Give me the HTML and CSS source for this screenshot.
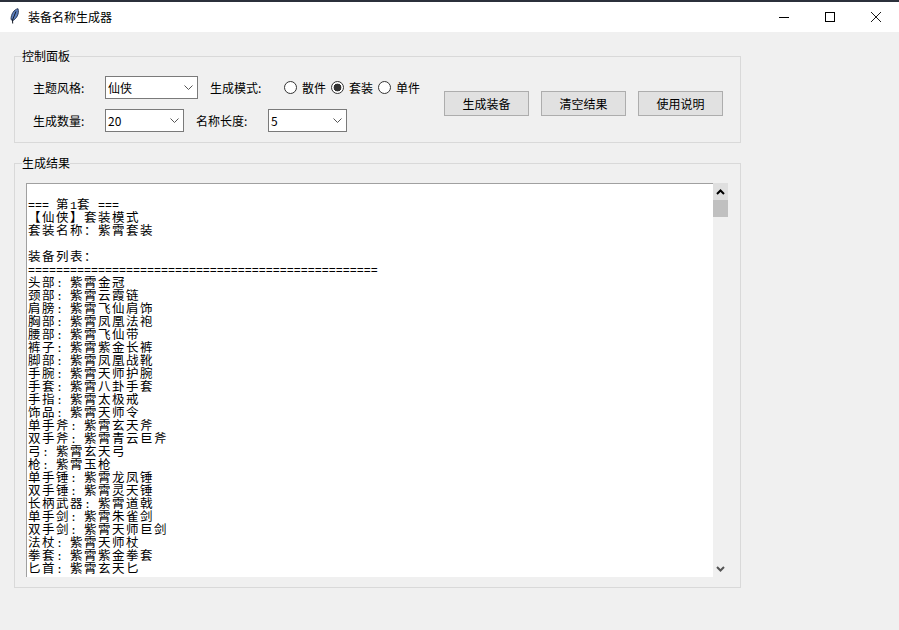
FILE: index.html
```html
<!DOCTYPE html>
<html lang="zh-CN">
<head>
<meta charset="utf-8">
<title>装备名称生成器</title>
<link rel="stylesheet" href="styles.css">
</head>
<body>
<div class="window">
  <header class="titlebar">
    <svg class="app-icon" width="12" height="18" viewBox="0 0 12 18">
      <path d="M10 .7C6 1.5 3 6 3 11.5L4.7 12.7C8.5 10.5 11.5 6 10 .7Z" fill="#5b7fbf" stroke="#1b2a4a" stroke-width="0.9"/>
      <path d="M8 3.5L4.5 12L4.7 15.5" fill="none" stroke="#141a26" stroke-width="1"/>
    </svg>
    <span class="app-title">装备名称生成器</span>
    <div class="win-controls">
      <div class="win-btn"><svg width="12" height="12" viewBox="0 0 12 12"><path d="M1 6.5H11" stroke="#000" fill="none"/></svg></div>
      <div class="win-btn"><svg width="12" height="12" viewBox="0 0 12 12"><rect x="1.5" y="1.5" width="9" height="9" stroke="#000" fill="none"/></svg></div>
      <div class="win-btn"><svg width="12" height="12" viewBox="0 0 12 12"><path d="M1 1L11 11M11 1L1 11" stroke="#000" fill="none" stroke-width="0.9"/></svg></div>
    </div>
  </header>

  <main class="content">
    <fieldset class="group">
      <legend class="group-title">控制面板</legend>
      <div class="controls">
        <div class="form">
          <div class="form-row">
            <label class="label label-first">主题风格:</label>
            <div class="combo combo-wide"><span>仙侠</span><svg class="chev" width="9" height="5" viewBox="0 0 9 5"><path d="M.5 .5L4.5 4.5L8.5 .5" fill="none" stroke="#555"/></svg></div>
            <label class="label label-mode">生成模式:</label>
            <div class="radios">
              <label class="radio"><input type="radio" name="mode">散件</label>
              <label class="radio"><input type="radio" name="mode" checked>套装</label>
              <label class="radio"><input type="radio" name="mode">单件</label>
            </div>
          </div>
          <div class="form-row">
            <label class="label label-first">生成数量:</label>
            <div class="combo"><span>20</span><svg class="chev" width="9" height="5" viewBox="0 0 9 5"><path d="M.5 .5L4.5 4.5L8.5 .5" fill="none" stroke="#555"/></svg></div>
            <label class="label label-len">名称长度:</label>
            <div class="combo"><span>5</span><svg class="chev" width="9" height="5" viewBox="0 0 9 5"><path d="M.5 .5L4.5 4.5L8.5 .5" fill="none" stroke="#555"/></svg></div>
          </div>
        </div>
        <div class="buttons">
          <button class="btn">生成装备</button>
          <button class="btn">清空结果</button>
          <button class="btn">使用说明</button>
        </div>
      </div>
    </fieldset>

    <fieldset class="group group-results">
      <legend class="group-title">生成结果</legend>
      <div class="results">
        <pre class="log">

<span class="a">=== </span>第<span class="a">1</span>套<span class="a"> ===</span>
【仙侠】套装模式
套装名称&#xFF1A;紫霄套装

装备列表&#xFF1A;
<span class="a">==================================================</span>
头部<span class="a">: </span>紫霄金冠
颈部<span class="a">: </span>紫霄云霞链
肩膀<span class="a">: </span>紫霄飞仙肩饰
胸部<span class="a">: </span>紫霄凤凰法袍
腰部<span class="a">: </span>紫霄飞仙带
裤子<span class="a">: </span>紫霄紫金长裤
脚部<span class="a">: </span>紫霄凤凰战靴
手腕<span class="a">: </span>紫霄天师护腕
手套<span class="a">: </span>紫霄八卦手套
手指<span class="a">: </span>紫霄太极戒
饰品<span class="a">: </span>紫霄天师令
单手斧<span class="a">: </span>紫霄玄天斧
双手斧<span class="a">: </span>紫霄青云巨斧
弓<span class="a">: </span>紫霄玄天弓
枪<span class="a">: </span>紫霄玉枪
单手锤<span class="a">: </span>紫霄龙凤锤
双手锤<span class="a">: </span>紫霄灵天锤
长柄武器<span class="a">: </span>紫霄道戟
单手剑<span class="a">: </span>紫霄朱雀剑
双手剑<span class="a">: </span>紫霄天师巨剑
法杖<span class="a">: </span>紫霄天师杖
拳套<span class="a">: </span>紫霄紫金拳套
匕首<span class="a">: </span>紫霄玄天匕
</pre>
        <div class="scrollbar">
          <div class="sb-btn sb-up"><svg width="9" height="6" viewBox="0 0 9 6"><path d="M1 5L4.5 1.5L8 5" fill="none" stroke="#000" stroke-width="2"/></svg></div>
          <div class="sb-thumb"></div>
          <div class="sb-track"></div>
          <div class="sb-btn"><svg width="9" height="6" viewBox="0 0 9 6"><path d="M1 1L4.5 4.5L8 1" fill="none" stroke="#555" stroke-width="2"/></svg></div>
        </div>
      </div>
    </fieldset>
  </main>
</div>
</body>
</html>
```
FILE: styles.css
```css
* { box-sizing: border-box; }
html, body { margin: 0; padding: 0; }
body {
  font-family: "Noto Sans CJK SC", "Liberation Sans", sans-serif;
  font-size: 12px;
  color: #000;
  background: #f0f0f0;
}
.window {
  height: 630px;
  overflow: hidden;
  border-top: 2px solid #2b303b;
  display: flex;
  flex-direction: column;
}
.titlebar {
  height: 30px;
  flex: none;
  background: #fff;
  display: flex;
  align-items: center;
  padding-left: 8px;
}
.app-icon { flex: none; }
.app-title { margin-left: 8px; line-height: 16px; }
.win-controls { margin-left: auto; display: flex; height: 30px; }
.win-btn {
  width: 46px;
  display: flex;
  align-items: center;
  justify-content: center;
}
.content {
  flex: 1;
  padding: 16px 158px 0 14px;
  display: flex;
  flex-direction: column;
  gap: 12px;
}
.group {
  margin: 0;
  padding: 12px 12px 10px 11px;
  min-width: 0;
  border: 1px solid #d9d9d9;
}
.group-title {
  margin-left: -4px;
  padding: 0;
  line-height: 16px;
  font-size: 12px;
}
.controls { display: flex; align-items: flex-start; padding-left: 7px; }
.form { display: flex; flex-direction: column; gap: 10px; }
.form-row { display: flex; align-items: center; height: 23px; }
.label { flex: none; line-height: 16px; white-space: nowrap; }
.label-first { width: 72px; }
.label-mode { width: 74px; margin-left: 12px; }
.label-len { width: 72px; margin-left: 12px; }
.combo {
  width: 79px;
  height: 23px;
  flex: none;
  background: #fff;
  border: 1px solid #7a7a7a;
  display: flex;
  align-items: center;
  justify-content: space-between;
  padding: 0 4px 0 2px;
  line-height: 16px;
}
.combo-wide { width: 93px; }
.chev { flex: none; }
.radios { display: flex; gap: 5px; }
.radio { display: flex; align-items: center; gap: 5px; line-height: 16px; }
.radio input {
  appearance: none;
  -webkit-appearance: none;
  width: 13px;
  height: 13px;
  margin: 0;
  background: #fff;
  border: 1px solid #333;
  border-radius: 50%;
}
.radio input:checked {
  background: radial-gradient(circle, #333 0, #333 3.6px, #fff 4.2px);
}
.buttons { display: flex; gap: 12px; margin: 15px 0 0 24px; }
.btn {
  width: 85px;
  height: 25px;
  padding: 0;
  font: inherit;
  color: #000;
  background: #e1e1e1;
  border: 1px solid #adadad;
  border-radius: 0;
}
.group-results { flex: none; }
.results { display: flex; height: 394px; }
.log {
  flex: 1;
  min-width: 0;
  margin: 0;
  padding: 0 0 0 1px;
  overflow: hidden;
  background: #fff;
  border-left: 1px solid #a0a0a0;
  border-top: 1px solid #a0a0a0;
  font-family: "Noto Sans CJK SC", sans-serif;
  font-size: 12.5px;
  letter-spacing: 1.5px;
  line-height: 13px;
  color: #000;
}
.a {
  font-family: "Liberation Mono", monospace;
  font-size: 11.67px;
  letter-spacing: 0;
  line-height: 0;
}
.scrollbar {
  width: 15px;
  flex: none;
  display: flex;
  flex-direction: column;
}
.sb-btn {
  height: 17px;
  display: flex;
  align-items: center;
  justify-content: center;
  flex: none;
}
.sb-up { background: #dfdfdf; }
.sb-thumb { height: 17px; flex: none; background: #c0c0c0; }
.sb-track { flex: 1; }
```
